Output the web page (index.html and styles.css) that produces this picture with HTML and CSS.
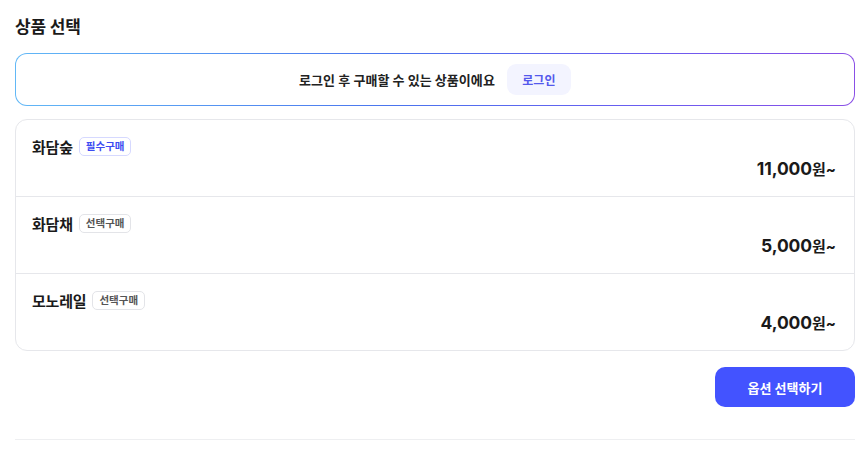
FILE: index.html
```html
<!DOCTYPE html>
<html lang="ko">
<head>
<meta charset="utf-8">
<link rel="stylesheet" href="styles.css">
</head>
<body>
<div class="page">
  <h2 class="title">상품 선택</h2>
  <div class="login-banner">
    <div class="login-inner">
      <span class="login-msg">로그인 후 구매할 수 있는 상품이에요</span>
      <button class="login-btn">로그인</button>
    </div>
  </div>
  <div class="products">
    <div class="product">
      <div class="product-head">
        <span class="product-name">화담숲</span>
        <span class="badge badge-required">필수구매</span>
      </div>
      <div class="product-price"><span class="num">11,000</span><span class="won">원~</span></div>
    </div>
    <div class="product">
      <div class="product-head">
        <span class="product-name">화담채</span>
        <span class="badge">선택구매</span>
      </div>
      <div class="product-price"><span class="num">5,000</span><span class="won">원~</span></div>
    </div>
    <div class="product">
      <div class="product-head">
        <span class="product-name">모노레일</span>
        <span class="badge">선택구매</span>
      </div>
      <div class="product-price"><span class="num">4,000</span><span class="won">원~</span></div>
    </div>
  </div>
  <div class="actions">
    <button class="option-btn">옵션 선택하기</button>
  </div>
  <div class="divider"></div>
</div>
</body>
</html>
```
FILE: styles.css
```css
* { box-sizing: border-box; }
html, body { margin: 0; padding: 0; background: #fff; }
body {
  font-family: Inter, "Noto Sans CJK KR", sans-serif;
  color: #1a1a1a;
}
.page {
  padding: 14px 10px 0 15px;
  width: 865px;
}
.title {
  margin: 0;
  font-size: 17px;
  font-weight: 700;
  line-height: 26px;
  color: #1a1a1a;
  letter-spacing: -0.2px;
}
.login-banner {
  margin-top: 13px;
  padding: 1px;
  border-radius: 12px;
  background: linear-gradient(90deg, #62b8f6 0%, #4a74ee 45%, #6a5cf0 75%, #8a4fe6 100%);
}
.login-inner {
  height: 51px;
  border-radius: 11px;
  background: #fff;
  display: flex;
  align-items: center;
  justify-content: center;
  gap: 12px;
}
.login-msg {
  font-size: 13px;
  font-weight: 700;
  color: #222;
  letter-spacing: 0.05px;
}
.login-btn {
  border: none;
  background: #f3f4ff;
  color: #5459ec;
  font-family: inherit;
  font-size: 12px;
  font-weight: 700;
  width: 64px;
  height: 31px;
  border-radius: 9px;
  padding: 0;
}
.products {
  margin-top: 13px;
  border: 1px solid #e6e7eb;
  border-radius: 12px;
}
.product {
  height: 77px;
  padding: 16px 18px 0 16px;
  border-bottom: 1px solid #e6e7eb;
  display: flex;
  flex-direction: column;
}
.product:last-child { border-bottom: none; height: 76px; }
.product-head {
  display: flex;
  align-items: center;
  gap: 6px;
  height: 20px;
}
.product-name {
  font-size: 15px;
  font-weight: 700;
  color: #1a1a1a;
  letter-spacing: -0.2px;
}
.badge {
  font-size: 10.5px;
  font-weight: 600;
  color: #555;
  border: 1px solid #e3e4e8;
  border-radius: 5px;
  padding: 0 6px;
  height: 19px;
  line-height: 17px;
}
.badge-required {
  color: #3d4bf2;
  border-color: #d6d9ff;
}
.product-price {
  margin-top: 0;
  text-align: right;
  font-weight: 700;
  color: #1a1a1a;
  line-height: 26px;
}
.product-price .num {
  font-size: 17.5px;
  letter-spacing: -0.1px;
}
.product-price .won {
  font-size: 15px;
}
.actions {
  margin-top: 16px;
  display: flex;
  justify-content: flex-end;
}
.option-btn {
  width: 140px;
  height: 40px;
  border: none;
  border-radius: 10px;
  background: #4353ff;
  color: #fff;
  font-family: inherit;
  font-size: 13px;
  font-weight: 700;
  padding: 0;
}
.divider {
  margin-top: 32px;
  height: 1px;
  background: #eeeff1;
}
```
